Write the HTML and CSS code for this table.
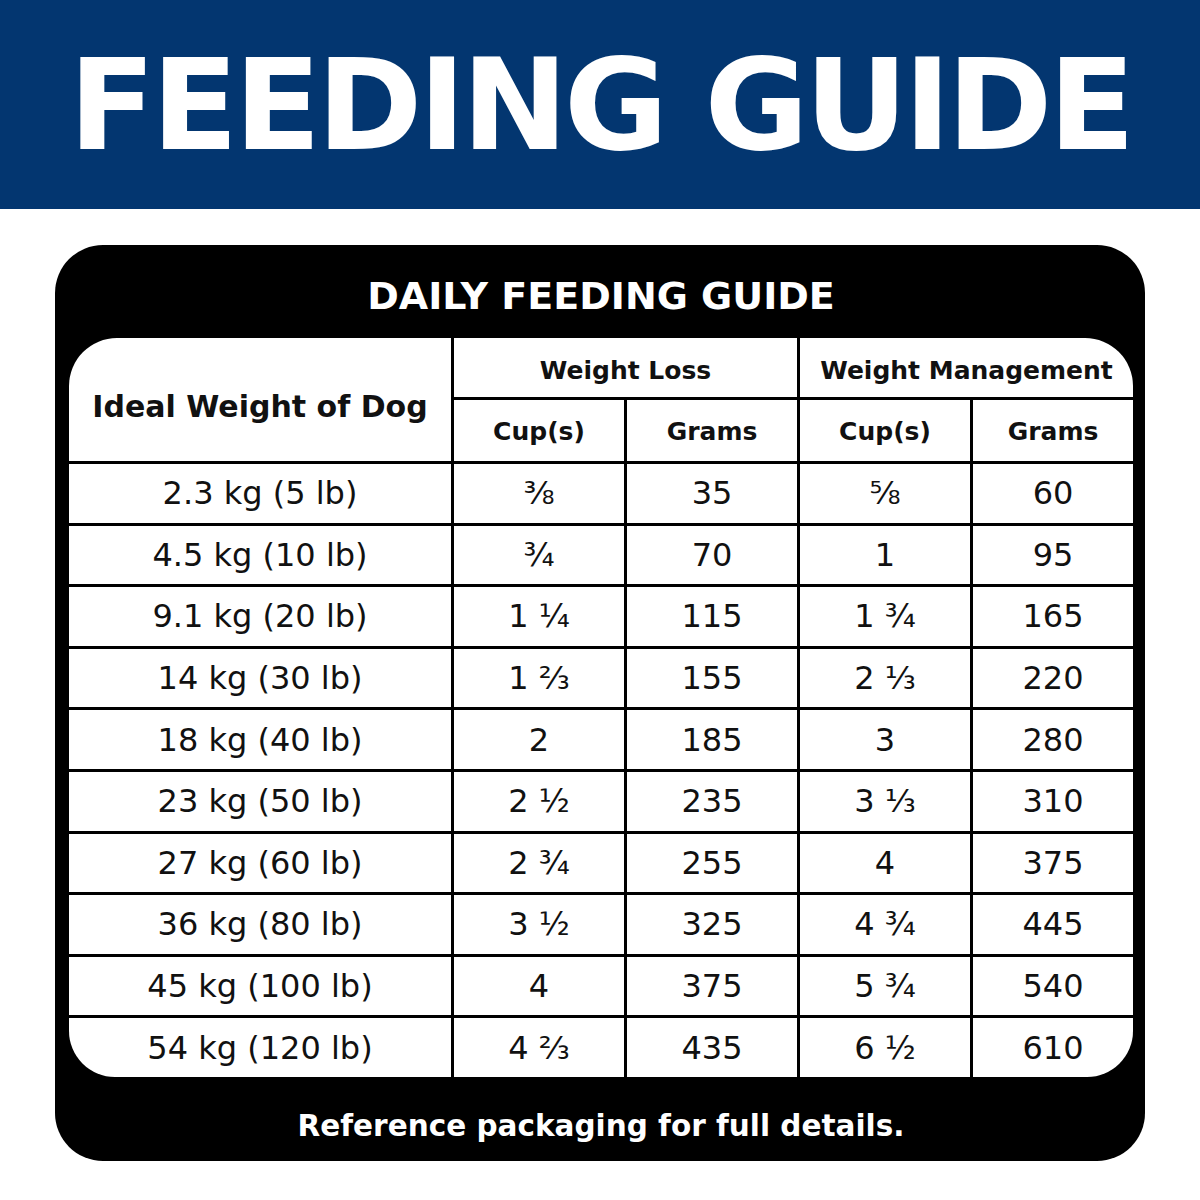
FILE: index.html
```html
<!DOCTYPE html>
<html lang="en">
<head>
<meta charset="utf-8">
<title>Feeding Guide</title>
<link rel="stylesheet" href="styles.css">
</head>
<body>
<header class="banner">
  <h1 class="banner-title">FEEDING GUIDE</h1>
</header>
<main class="page">
  <section class="card">
    <h2 class="card-title">DAILY FEEDING GUIDE</h2>
    <div class="table-wrap">
      <div class="grid">
        <div class="cell head head-main">Ideal Weight of Dog</div>
        <div class="cell head head-group">Weight Loss</div>
        <div class="cell head head-group">Weight Management</div>
        <div class="cell head head-sub">Cup(s)</div>
        <div class="cell head head-sub">Grams</div>
        <div class="cell head head-sub">Cup(s)</div>
        <div class="cell head head-sub">Grams</div>

        <div class="cell">2.3 kg (5 lb)</div><div class="cell">⅜</div><div class="cell">35</div><div class="cell">⅝</div><div class="cell">60</div>
        <div class="cell">4.5 kg (10 lb)</div><div class="cell">¾</div><div class="cell">70</div><div class="cell">1</div><div class="cell">95</div>
        <div class="cell">9.1 kg (20 lb)</div><div class="cell">1 ¼</div><div class="cell">115</div><div class="cell">1 ¾</div><div class="cell">165</div>
        <div class="cell">14 kg (30 lb)</div><div class="cell">1 ⅔</div><div class="cell">155</div><div class="cell">2 ⅓</div><div class="cell">220</div>
        <div class="cell">18 kg (40 lb)</div><div class="cell">2</div><div class="cell">185</div><div class="cell">3</div><div class="cell">280</div>
        <div class="cell">23 kg (50 lb)</div><div class="cell">2 ½</div><div class="cell">235</div><div class="cell">3 ⅓</div><div class="cell">310</div>
        <div class="cell">27 kg (60 lb)</div><div class="cell">2 ¾</div><div class="cell">255</div><div class="cell">4</div><div class="cell">375</div>
        <div class="cell">36 kg (80 lb)</div><div class="cell">3 ½</div><div class="cell">325</div><div class="cell">4 ¾</div><div class="cell">445</div>
        <div class="cell">45 kg (100 lb)</div><div class="cell">4</div><div class="cell">375</div><div class="cell">5 ¾</div><div class="cell">540</div>
        <div class="cell">54 kg (120 lb)</div><div class="cell">4 ⅔</div><div class="cell">435</div><div class="cell">6 ½</div><div class="cell">610</div>
      </div>
    </div>
    <p class="card-footer">Reference packaging for full details.</p>
  </section>
</main>
</body>
</html>
```
FILE: styles.css
```css
* { box-sizing: border-box; }
html, body { margin: 0; padding: 0; background: #ffffff; }
body { font-family: "DejaVu Sans", "Liberation Sans", sans-serif; color: #111; width: 1200px; }

.banner {
  height: 209px;
  background: #033670;
  display: flex;
  align-items: center;
  justify-content: center;
}
.banner-title {
  margin: 0;
  padding-top: 2px;
  font-size: 127px;
  font-weight: 700;
  letter-spacing: -4px;
  color: #ffffff;
  line-height: 1;
}

.page { padding: 36px 55px 0 55px; }

.card {
  background: #000;
  border-radius: 48px;
  padding: 0 12px 0 14px;
  display: flex;
  flex-direction: column;
}
.card-title {
  margin: 0;
  height: 93px;
  padding-top: 8px;
  display: flex;
  align-items: center;
  justify-content: center;
  color: #fff;
  font-size: 38px;
  font-weight: 700;
  line-height: 1;
}

.table-wrap {
  background: #000;
  border-radius: 48px 48px 46px 46px;
  overflow: hidden;
}
.grid {
  display: grid;
  grid-template-columns: 382px 170px 170px 170px 160px;
  grid-template-rows: 59px 61px repeat(10, 58.6px);
  gap: 3px;
  background: #000;
}
.cell {
  background: #fff;
  display: flex;
  align-items: center;
  justify-content: center;
  font-size: 32px;
  line-height: 1;
  color: #111;
}
.head { font-weight: 700; font-size: 25px; }
.head-main { grid-row: span 2; font-size: 30px; padding-top: 14px; }
.head-group { grid-column: span 2; padding-top: 6px; }
.head-sub { padding-top: 2px; }

.card-footer {
  margin: 0;
  height: 84px;
  padding-top: 16px;
  display: flex;
  align-items: center;
  justify-content: center;
  color: #fff;
  font-size: 29.5px;
  font-weight: 700;
  line-height: 1;
}
```
